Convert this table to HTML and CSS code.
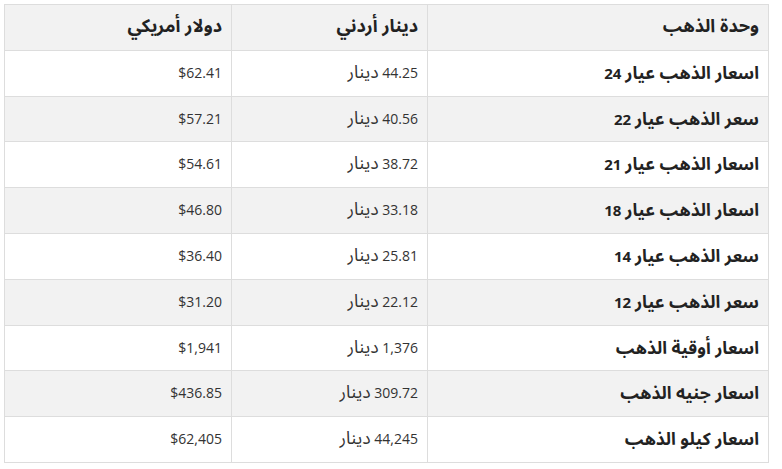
FILE: index.html
```html
<!DOCTYPE html>
<html lang="ar">
<head>
<meta charset="utf-8">
<link rel="stylesheet" href="styles.css">
</head>
<body>
<table class="gold" dir="rtl">
  <thead>
    <tr><th class="c1"><span class="ar">وحدة الذهب</span></th><th class="c2"><span class="ar">دينار أردني</span></th><th class="c3"><span class="ar">دولار أمريكي</span></th></tr>
  </thead>
  <tbody>
    <tr><td class="name"><span class="ar">اسعار الذهب عيار</span> 24</td><td>44.25 <span class="ar">دينار</span></td><td>$62.41</td></tr>
    <tr><td class="name"><span class="ar">سعر الذهب عيار</span> 22</td><td>40.56 <span class="ar">دينار</span></td><td>$57.21</td></tr>
    <tr><td class="name"><span class="ar">اسعار الذهب عيار</span> 21</td><td>38.72 <span class="ar">دينار</span></td><td>$54.61</td></tr>
    <tr><td class="name"><span class="ar">اسعار الذهب عيار</span> 18</td><td>33.18 <span class="ar">دينار</span></td><td>$46.80</td></tr>
    <tr><td class="name"><span class="ar">سعر الذهب عيار</span> 14</td><td>25.81 <span class="ar">دينار</span></td><td>$36.40</td></tr>
    <tr><td class="name"><span class="ar">سعر الذهب عيار</span> 12</td><td>22.12 <span class="ar">دينار</span></td><td>$31.20</td></tr>
    <tr><td class="name"><span class="ar">اسعار أوقية الذهب</span></td><td>1,376 <span class="ar">دينار</span></td><td>$1,941</td></tr>
    <tr><td class="name"><span class="ar">اسعار جنيه الذهب</span></td><td>309.72 <span class="ar">دينار</span></td><td>$436.85</td></tr>
    <tr><td class="name"><span class="ar">اسعار كيلو الذهب</span></td><td>44,245 <span class="ar">دينار</span></td><td>$62,405</td></tr>
  </tbody>
</table>
</body>
</html>
```
FILE: styles.css
```css
html, body { background: #fff; }
body {
  margin: 4px;
  font-family: "Open Sans", "Noto Sans Arabic", "DejaVu Sans", sans-serif;
  font-size: 14px;
  color: #333;
}
.gold {
  border-collapse: collapse;
  width: 764px;
  table-layout: fixed;
}
.gold th, .gold td {
  box-sizing: border-box;
  border: 1px solid #ddd;
  padding: 12px 9px;
  height: 45.8px;
  line-height: 20.8px;
  text-align: right;
  white-space: nowrap;
}
.gold .ar {
  font-family: "Noto Sans Arabic", "DejaVu Sans", sans-serif;
  font-size: 17.5px;
  line-height: 1;
}
.gold th .ar { font-size: 18px; }
.gold th { font-weight: bold; color: #222; background: #f2f2f2; }
.gold .c1 { width: 341px; }
.gold .c2 { width: 196px; }
.gold .c3 { width: 227px; }
.gold tbody tr:nth-child(even) td { background: #f2f2f2; }
.gold td.name { font-weight: bold; color: #222; font-size: 15px; }
```
